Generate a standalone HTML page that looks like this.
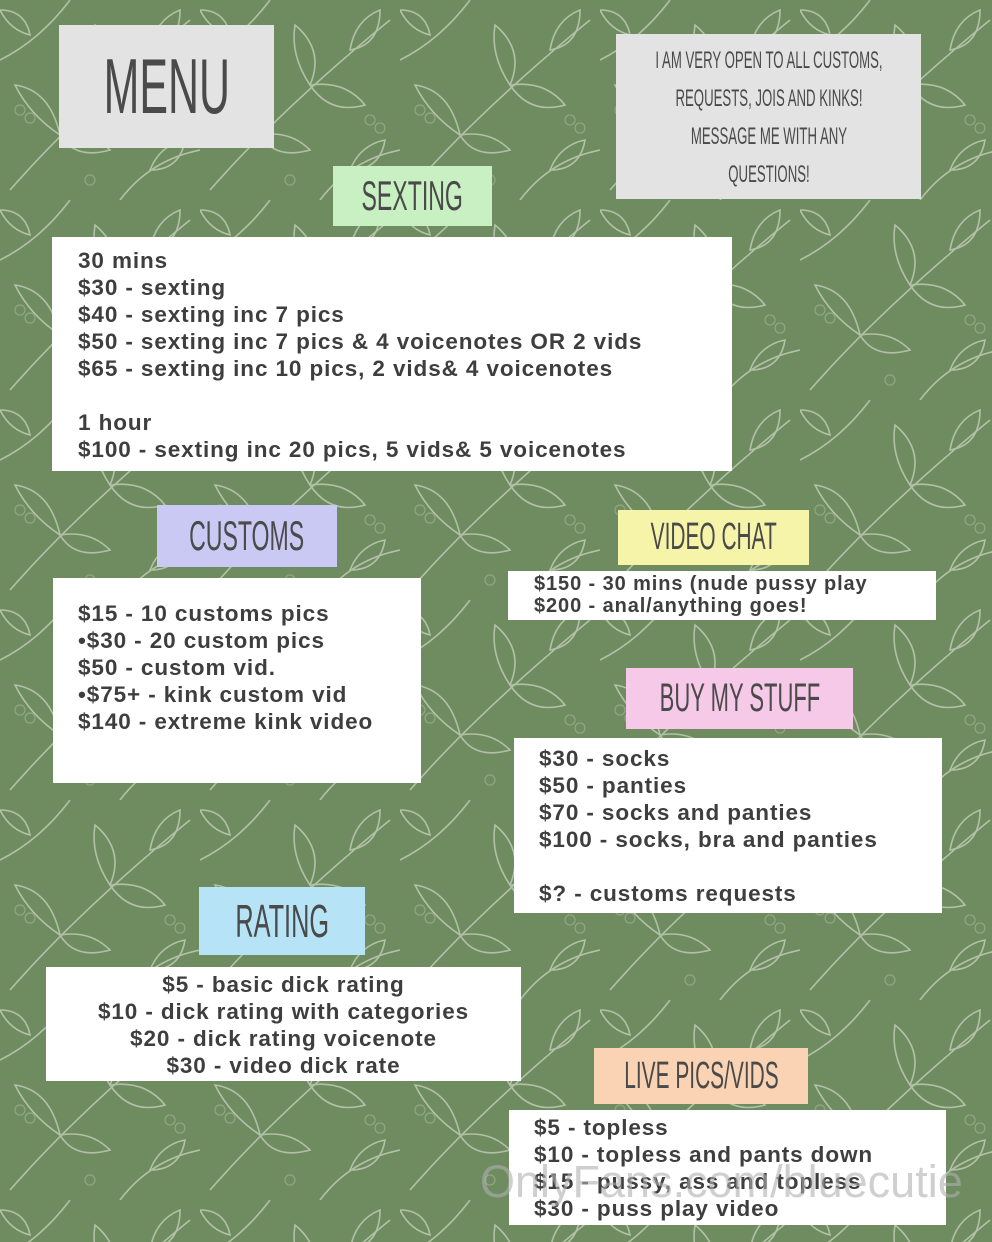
<!DOCTYPE html>
<html><head><meta charset="utf-8">
<style>
*{margin:0;padding:0;box-sizing:border-box}
body{width:992px;height:1242px;position:relative;overflow:hidden;background:#6f8c61;font-family:"Liberation Sans","DejaVu Sans",sans-serif}
.bg{position:absolute;left:0;top:0}
.b{position:absolute}
.lab{position:absolute;display:flex;align-items:center;justify-content:center;color:#4a4a4a;font-family:"Liberation Sans Narrow","Liberation Sans",sans-serif;text-transform:uppercase}
.lab span{display:inline-block;transform:scaleX(0.55);white-space:nowrap}
.w{position:absolute;background:#fff;color:#3e3e3e;font-weight:bold;font-size:22.5px;line-height:27px;white-space:pre;letter-spacing:0.9px}
.wm{position:absolute;left:480px;top:1156px;font-size:45px;color:rgba(175,175,175,0.6);white-space:nowrap;z-index:5}
</style></head><body>
<svg class="bg" width="992" height="1242">
<defs><pattern id="p" width="200" height="200" patternUnits="userSpaceOnUse">
<g fill="none" stroke="#c9d2bf" stroke-width="1.6" opacity="0.75">
<path d="M10 190 Q80 110 190 20"/>
<path d="M60 135 q-30 -20 -45 -50 q35 5 45 50z"/>
<path d="M60 135 q30 -5 50 15 q-35 10 -50 -15z"/>
<path d="M110 85 q-20 -30 -15 -60 q30 25 15 60z"/>
<path d="M110 85 q35 -5 55 20 q-35 10 -55 -20z"/>
<path d="M150 50 q5 -30 30 -40 q0 35 -30 40z"/>
<path d="M0 60 Q40 40 70 0"/>
<path d="M30 35 q-20 -5 -30 -25 q25 0 30 25z"/>
<path d="M120 200 Q150 160 200 150"/>
<path d="M150 170 q10 -25 35 -30 q-5 30 -35 30z"/>
</g>
<g fill="none" stroke="#9fb08f" stroke-width="1.2" opacity="0.7">
<circle cx="20" cy="110" r="5"/><circle cx="30" cy="118" r="5"/><circle cx="170" cy="120" r="5"/><circle cx="180" cy="128" r="5"/><circle cx="90" cy="180" r="5"/>
</g>
</pattern></defs>
<rect width="992" height="1242" fill="url(#p)"/>
</svg>

<div class="lab" style="left:59px;top:25px;width:215px;height:123px;background:#e3e3e3;font-size:78px"><span>Menu</span></div>
<div class="b" style="left:616px;top:34px;width:305px;height:165px;background:#e3e3e3;color:#4a4a4a;font-family:'Liberation Sans Narrow','Liberation Sans',sans-serif;text-transform:uppercase;font-size:24px;line-height:38px;text-align:center;padding-top:8px"><div style="transform:scaleX(0.55);transform-origin:center;width:540px;margin-left:-117px">I am VERY open to all customs,<br>requests, JOIs and kinks!<br>Message me with any<br>questions!</div></div>

<div class="lab" style="left:333px;top:166px;width:159px;height:60px;background:#c9f0c3;font-size:42px"><span>Sexting</span></div>
<div class="w" style="left:52px;top:237px;width:680px;height:234px;padding:10px 0 0 26px">30 mins
$30 - sexting
$40 - sexting inc 7 pics
$50 - sexting inc 7 pics &amp; 4 voicenotes OR 2 vids
$65 - sexting inc 10 pics, 2 vids&amp; 4 voicenotes

1 hour
$100 - sexting inc 20 pics, 5 vids&amp; 5 voicenotes</div>

<div class="lab" style="left:157px;top:505px;width:180px;height:62px;background:#c9c9f4;font-size:42px"><span>Customs</span></div>
<div class="w" style="left:53px;top:578px;width:368px;height:205px;padding:22px 0 0 25px">$15 - 10 customs pics
•$30 - 20 custom pics
$50 - custom vid.
•$75+ - kink custom vid
$140 - extreme kink video</div>

<div class="lab" style="left:618px;top:510px;width:191px;height:55px;background:#f6f4a9;font-size:38px"><span>Video chat</span></div>
<div class="w" style="left:508px;top:571px;width:428px;height:49px;padding:2px 0 0 26px;font-size:20px;line-height:22px;letter-spacing:0.9px">$150 - 30 mins (nude pussy play
$200 - anal/anything goes!</div>

<div class="lab" style="left:626px;top:668px;width:227px;height:61px;background:#f5c9e7;font-size:40px"><span>Buy my stuff</span></div>
<div class="w" style="left:514px;top:738px;width:428px;height:175px;padding:7px 0 0 25px">$30 - socks
$50 - panties
$70 - socks and panties
$100 - socks, bra and panties

$? - customs requests</div>

<div class="lab" style="left:199px;top:887px;width:166px;height:68px;background:#b6e4f6;font-size:46px"><span>Rating</span></div>
<div class="w" style="left:46px;top:967px;width:475px;height:114px;padding:4px 0 0 0;text-align:center">$5 - basic dick rating
$10 - dick rating with categories
$20 - dick rating voicenote
$30 - video dick rate</div>

<div class="lab" style="left:594px;top:1048px;width:214px;height:56px;background:#f9d3b3;font-size:38px"><span>Live pics/vids</span></div>
<div class="w" style="left:509px;top:1110px;width:437px;height:115px;padding:4px 0 0 25px">$5 - topless
$10 - topless and pants down
$15 - pussy, ass and topless
$30 - puss play video</div>

<div class="wm">OnlyFans.com/bluecutie</div>
</body></html>
